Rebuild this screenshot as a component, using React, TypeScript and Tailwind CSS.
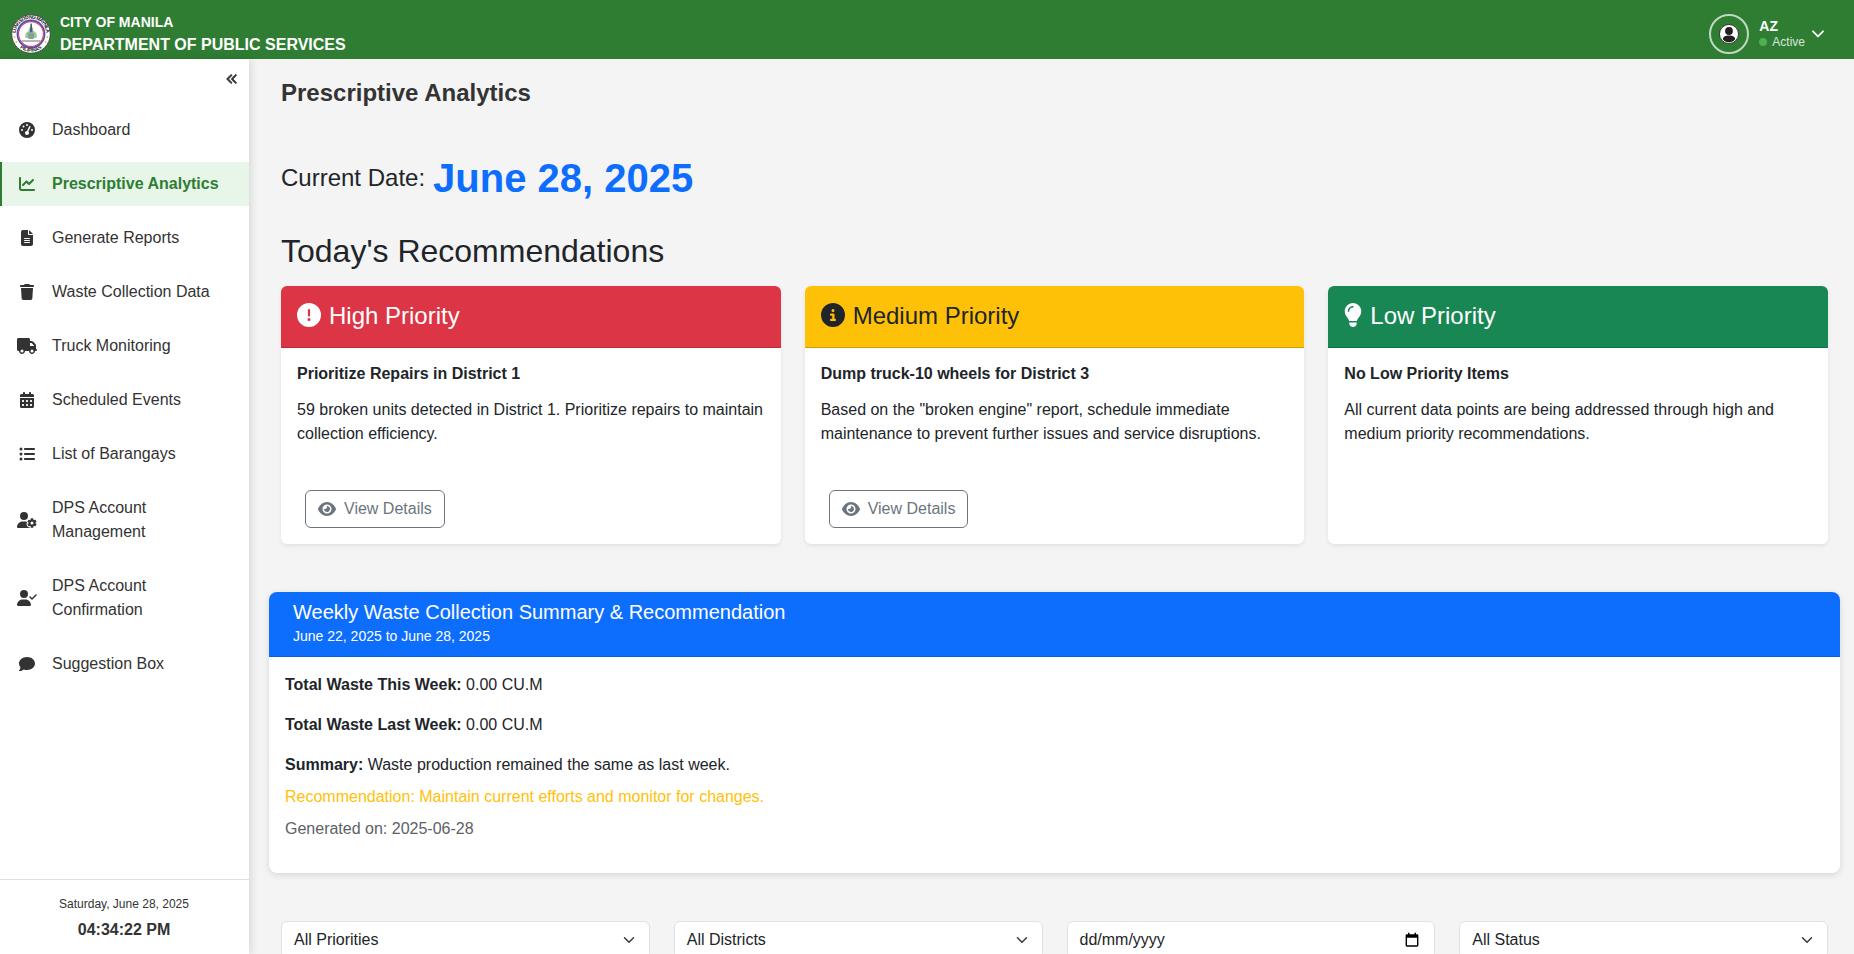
import type { ReactNode } from "react";
import type { IconType } from "react-icons";
import {
  FaAnglesLeft,
  FaCalendarDays,
  FaChartLine,
  FaCircleExclamation,
  FaCircleInfo,
  FaComment,
  FaEye,
  FaFileLines,
  FaGaugeHigh,
  FaLightbulb,
  FaListUl,
  FaTrash,
  FaTruck,
  FaUserCheck,
  FaUserGear,
} from "react-icons/fa6";

type NavItem = { label: string; icon: IconType; iconSize: string; active?: boolean };

const navItems: NavItem[] = [
  { label: "Dashboard", icon: FaGaugeHigh, iconSize: "h-4 w-4" },
  { label: "Prescriptive Analytics", icon: FaChartLine, iconSize: "h-4 w-4", active: true },
  { label: "Generate Reports", icon: FaFileLines, iconSize: "h-4 w-3" },
  { label: "Waste Collection Data", icon: FaTrash, iconSize: "h-4 w-[14px]" },
  { label: "Truck Monitoring", icon: FaTruck, iconSize: "h-4 w-5" },
  { label: "Scheduled Events", icon: FaCalendarDays, iconSize: "h-4 w-[14px]" },
  { label: "List of Barangays", icon: FaListUl, iconSize: "h-4 w-4" },
  { label: "DPS Account Management", icon: FaUserGear, iconSize: "h-4 w-5" },
  { label: "DPS Account Confirmation", icon: FaUserCheck, iconSize: "h-4 w-5" },
  { label: "Suggestion Box", icon: FaComment, iconSize: "h-4 w-4" },
];

type Recommendation = {
  level: string;
  icon: IconType;
  iconSize: string;
  header: string;
  title: string;
  text: string;
  details: boolean;
};

const recommendations: Recommendation[] = [
  {
    level: "High Priority",
    icon: FaCircleExclamation,
    iconSize: "h-6 w-6",
    header: "bg-[#dc3545] border-[#b62c39] text-white",
    title: "Prioritize Repairs in District 1",
    text: "59 broken units detected in District 1. Prioritize repairs to maintain collection efficiency.",
    details: true,
  },
  {
    level: "Medium Priority",
    icon: FaCircleInfo,
    iconSize: "h-6 w-6",
    header: "bg-[#ffc107] border-[#d29f06] text-[#212529]",
    title: "Dump truck-10 wheels for District 3",
    text: 'Based on the "broken engine" report, schedule immediate maintenance to prevent further issues and service disruptions.',
    details: true,
  },
  {
    level: "Low Priority",
    icon: FaLightbulb,
    iconSize: "h-6 w-[18px]",
    header: "bg-[#198754] border-[#156f45] text-white",
    title: "No Low Priority Items",
    text: "All current data points are being addressed through high and medium priority recommendations.",
    details: false,
  },
];

function Seal() {
  return (
    <svg viewBox="0 0 40 40" className="size-10 shrink-0">
      <defs>
        <path id="seal-top" d="M4.6 20a15.4 15.4 0 0 1 30.8 0" />
        <path id="seal-bottom" d="M2.2 20a17.8 17.8 0 0 0 35.6 0" />
      </defs>
      <circle cx="20" cy="20" r="19.3" fill="#fff" stroke="#4a4a4a" strokeWidth="1" />
      <circle cx="20" cy="20" r="13.6" fill="#fff" stroke="#3f4fc0" strokeWidth="1.6" />
      <circle cx="20" cy="20" r="12.4" fill="none" stroke="#d8405a" strokeWidth="1.1" />
      <text fontSize="5" fontWeight="bold" fill="#222" fontFamily="Liberation Sans, sans-serif">
        <textPath href="#seal-top" textLength="46" startOffset="1">LUNGSOD NG MAYNILA</textPath>
      </text>
      <text fontSize="5" fontWeight="bold" fill="#222" fontFamily="Liberation Sans, sans-serif">
        <textPath href="#seal-bottom" startOffset="50%" textAnchor="middle" textLength="24">PILIPINAS</textPath>
      </text>
      <g fill="#e6c34a">
        <circle cx="3.6" cy="23" r="0.9" />
        <circle cx="5.4" cy="28" r="0.9" />
        <circle cx="36.4" cy="23" r="0.9" />
        <circle cx="34.6" cy="28" r="0.9" />
      </g>
      <path d="M14.5 24c-1-3 .5-6 3-7 .3-2.500 1-4 2.500-4.500 1.500.5 2.500 2 2.500 4.500 3 1 4 4 3 7z" fill="#a8c8a0" />
      <path d="M19.500 9.500h1.300l.7 9h-2.700z" fill="#3f5f7a" />
      <path d="M16.500 19.500l3.500-2 3.500 2.500-1 5h-5z" fill="#7fa58d" />
      <path d="M10.500 27h19" stroke="#8a9298" strokeWidth="1.300" />
    </svg>
  );
}

function Header() {
  return (
    <header className="flex h-[59px] shrink-0 items-center justify-between bg-[#2e7d32] pl-[11px] pr-[30px] pt-[9px] text-white">
      <div className="flex items-center gap-[9px]">
        <Seal />
        <div className="flex flex-col font-bold">
          <span className="text-[14px] leading-[19px]">CITY OF MANILA</span>
          <span className="mt-[2px] text-[16px] leading-[22px]">DEPARTMENT OF PUBLIC SERVICES</span>
        </div>
      </div>
      <div className="flex items-center">
        <div className="flex size-10 items-center justify-center rounded-full border-2 border-white/70">
          <svg viewBox="0 0 20 20" className="size-5">
            <circle cx="10" cy="10" r="9.500" fill="#fff" stroke="#231f20" strokeWidth="0.8" />
            <circle cx="10" cy="7" r="3.900" fill="#231f20" />
            <path d="M3.800 15.300c0-2.200 2.500-3.700 6.200-3.700s6.200 1.500 6.200 3.700c-1.400 1.800-3.600 2.900-6.200 2.900s-4.800-1.100-6.200-2.900z" fill="#231f20" />
          </svg>
        </div>
        <div className="ml-[10px] flex flex-col">
          <span className="text-[14px] font-bold leading-[17px]">AZ</span>
          <span className="flex items-center gap-[5px] text-[12px] leading-[15px] text-white/80">
            <span className="-mt-px size-2 rounded-full bg-[#4caf50]" />
            Active
          </span>
        </div>
        <svg viewBox="0 0 12 8" className="ml-[7px] h-2 w-3" fill="none" stroke="#fff" strokeWidth="1.800" strokeLinecap="round" strokeLinejoin="round">
          <path d="M1 1.300l5 5 5-5" />
        </svg>
      </div>
    </header>
  );
}

function Sidebar() {
  return (
    <aside className="relative z-10 flex w-[249px] shrink-0 flex-col bg-white text-[#333] shadow-[2px_0_8px_rgba(0,0,0,0.12)]">
      <div className="flex h-[39px] items-center justify-end pr-[11px]">
        <FaAnglesLeft className="size-3" stroke="currentColor" strokeWidth="28" />
      </div>
      <nav className="flex flex-col gap-[10px] pt-[10px]">
        {navItems.map(({ label, icon: Icon, iconSize, active }) => (
          <a
            key={label}
            className={
              active
                ? "flex items-center border-l-2 border-[#2e7d32] bg-[#e8f5e9] py-[10px] pr-5 font-bold text-[#2e7d32]"
                : "flex items-center border-l-2 border-transparent py-[10px] pr-5"
            }
          >
            <span className="flex w-[50px] shrink-0 justify-center">
              <Icon className={iconSize} />
            </span>
            <span className={active ? "whitespace-nowrap leading-6" : "max-w-[160px] leading-6"}>{label}</span>
          </a>
        ))}
      </nav>
      <div className="mt-auto flex h-[75px] flex-col items-center border-t border-[#e0e0e0] pr-px pt-[15px]">
        <span className="text-[12px] leading-[18px]">Saturday, June 28, 2025</span>
        <span className="mt-[5px] font-bold leading-6">04:34:22 PM</span>
      </div>
    </aside>
  );
}

function RecommendationCard({ item }: { item: Recommendation }) {
  const Icon = item.icon;
  return (
    <section className="flex h-[258px] flex-col overflow-hidden rounded-md bg-white shadow-[0_2px_4px_rgba(0,0,0,0.075)]">
      <div className={`flex h-[62px] shrink-0 items-center gap-2 border-b px-4 pb-[3px] text-2xl ${item.header}`}>
        <Icon className={item.iconSize} />
        <h4 className="leading-[29px]">{item.level}</h4>
      </div>
      <div className="flex flex-1 flex-col items-start p-4">
        <h5 className="font-bold leading-[19px]">{item.title}</h5>
        <p className="mt-[15px] leading-6">{item.text}</p>
        {item.details && (
          <button className="ml-2 mt-auto flex h-[38px] items-center gap-2 rounded-md border border-[#6c757d] px-3 text-[#6c757d]">
            <FaEye className="h-4 w-[18px]" />
            View Details
          </button>
        )}
      </div>
    </section>
  );
}

function Line({ label, children }: { label: string; children: ReactNode }) {
  return (
    <p className="mb-4 leading-6">
      <strong className="font-bold">{label}</strong> {children}
    </p>
  );
}

function WeeklySummary() {
  return (
    <section className="-mx-3 mt-12 h-[281px] overflow-hidden rounded-lg bg-white shadow-[0_2px_6px_rgba(0,0,0,0.12)]">
      <div className="h-[65px] border-b border-[#0b5ed7] bg-[#0d6efd] px-6 pt-2 text-white">
        <h5 className="text-xl leading-6">Weekly Waste Collection Summary &amp; Recommendation</h5>
        <p className="mt-[2px] text-sm leading-[21px]">June 22, 2025 to June 28, 2025</p>
      </div>
      <div className="p-4">
        <Line label="Total Waste This Week:">0.00 CU.M</Line>
        <Line label="Total Waste Last Week:">0.00 CU.M</Line>
        <Line label="Summary:">Waste production remained the same as last week.</Line>
        <p className="-mt-2 leading-6 text-[#ffc107]">Recommendation: Maintain current efforts and monitor for changes.</p>
        <p className="mt-2 leading-6 text-[#5d6166]">Generated on: 2025-06-28</p>
      </div>
    </section>
  );
}

function Filter({ label, date }: { label: string; date?: boolean }) {
  return (
    <div className="flex h-[38px] items-center justify-between rounded-md border border-[#dee2e6] bg-white pl-3 pr-[14px]">
      <span>{label}</span>
      {date ? (
        <svg viewBox="0 0 14 16" className="mr-[1px] h-4 w-[14px]" fill="#000">
          <path d="M3 0.800h1.500v1.500h5V0.800H11v1.500h1c.8 0 1.400.6 1.400 1.400v9.600c0 .8-.6 1.400-1.400 1.400H2c-.8 0-1.400-.6-1.400-1.400V3.700c0-.8.6-1.400 1.400-1.400h1zM2 5.700v7.600h10V5.700z" />
        </svg>
      ) : (
        <svg viewBox="0 0 16 16" className="size-3" fill="none" stroke="#343a40" strokeWidth="2" strokeLinecap="round" strokeLinejoin="round">
          <path d="m2 5 6 6 6-6" />
        </svg>
      )}
    </div>
  );
}

export default function App() {
  return (
    <div className="flex h-screen flex-col overflow-hidden bg-[#f4f4f4] font-['Liberation_Sans',Arial,sans-serif] text-base text-[#212529]">
      <Header />
      <div className="flex min-h-0 flex-1">
        <Sidebar />
        <main className="min-w-0 flex-1 overflow-hidden pl-8 pr-[26px] pt-[19px]">
          <h2 className="text-2xl font-bold leading-[29px] text-[#333]">Prescriptive Analytics</h2>
          <div className="mt-[47px] flex h-12 items-center gap-2 text-2xl">
            <span>Current Date:</span>
            <span className="text-[40px] font-bold leading-[48px] text-[#0d6efd]">June 28, 2025</span>
          </div>
          <h2 className="mt-[30px] text-[32px] leading-[38px]">Today's Recommendations</h2>
          <div className="mt-4 grid grid-cols-3 gap-6">
            {recommendations.map((item) => (
              <RecommendationCard key={item.level} item={item} />
            ))}
          </div>
          <WeeklySummary />
          <div className="mt-12 grid grid-cols-4 gap-6">
            <Filter label="All Priorities" />
            <Filter label="All Districts" />
            <Filter label="dd/mm/yyyy" date />
            <Filter label="All Status" />
          </div>
        </main>
      </div>
    </div>
  );
}
